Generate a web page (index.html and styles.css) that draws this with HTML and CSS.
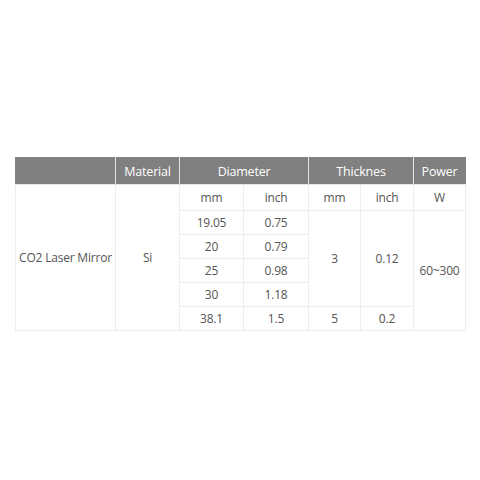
FILE: index.html
```html
<!DOCTYPE html>
<html>
<head>
<meta charset="utf-8">
<link rel="stylesheet" href="styles.css">
</head>
<body>
<div class="wrap">
<table class="spec">
<colgroup>
<col class="c1"><col class="c2"><col class="c3"><col class="c4"><col class="c5"><col class="c6"><col class="c7">
</colgroup>
<thead>
<tr class="head">
<th></th><th>Material</th><th colspan="2">Diameter</th><th colspan="2">Thicknes</th><th>Power</th>
</tr>
</thead>
<tbody>
<tr class="sub">
<td rowspan="7">CO2 Laser Mirror</td><td rowspan="7">Si</td><td>mm</td><td>inch</td><td>mm</td><td>inch</td><td>W</td>
</tr>
<tr class="r"><td>19.05</td><td>0.75</td><td rowspan="4">3</td><td rowspan="4">0.12</td><td rowspan="5">60~300</td></tr>
<tr class="r"><td>20</td><td>0.79</td></tr>
<tr class="r"><td>25</td><td>0.98</td></tr>
<tr class="r"><td>30</td><td>1.18</td></tr>
<tr class="r"><td>38.1</td><td>1.5</td><td>5</td><td>0.2</td></tr>
</tbody>
</table>
</div>
</body>
</html>
```
FILE: styles.css
```css
html, body {
  margin: 0;
  padding: 0;
  background: #fff;
}
.wrap {
  padding: 157px 0 0 15px;
}
.spec {
  border-collapse: collapse;
  table-layout: fixed;
  width: 450px;
  font-family: "Open Sans", "Noto Sans", sans-serif;
  color: #555;
  font-size: 12px;
}
.c1 { width: 100px; }
.c2 { width: 64px; }
.c3 { width: 64px; }
.c4 { width: 65px; }
.c5 { width: 52px; }
.c6 { width: 53px; }
.c7 { width: 52px; }
.spec th {
  background: #808080;
  color: #fff;
  font-weight: normal;
  font-size: 12.5px;
  letter-spacing: -0.2px;
  height: 26px;
  padding: 0;
  border: 1px solid #e6e6e6;
  border-top-color: #808080;
}
.spec th:first-child { border-left-color: #808080; }
.spec th:last-child { border-right-color: #808080; }
.spec td {
  border: 1px solid #ececec;
  text-align: center;
  padding: 0;
  letter-spacing: -0.2px;
}
.sub td { height: 25px; }
.r td { height: 23px; }
```
